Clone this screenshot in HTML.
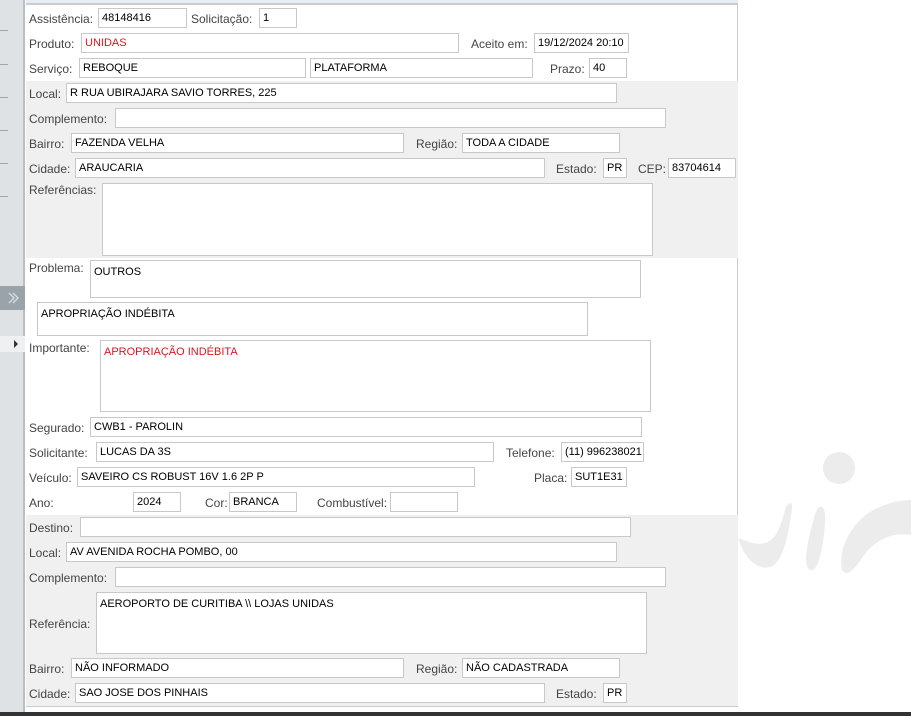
<!DOCTYPE html>
<html><head><meta charset="utf-8"><style>
*{box-sizing:border-box;margin:0;padding:0}
body{width:911px;height:716px;overflow:hidden;background:#fff;font-family:Tahoma,"Liberation Sans",sans-serif;font-size:12px;color:#222;position:relative}
.a{position:absolute}
.l{position:absolute;color:#444;line-height:14px}
.i{position:absolute;background:#fff;border:1px solid #c8c8c8;height:20px;padding:2px 3px;line-height:15px;color:#000;white-space:nowrap;overflow:hidden;font-size:11px}
.t{position:absolute;background:#fff;border:1px solid #c8c8c8;padding:7px 3px;line-height:14px;color:#000;font-size:11px}
.r{color:#e0141e}
.tick{position:absolute;left:0;width:8px;height:1px;background:#9aa}
</style></head><body>
<div class="a" style="left:0;top:0;width:25px;height:712px;background:#dfe2e5;border-right:2px solid #b9bec3"></div>
<div class="tick" style="top:30px"></div><div class="tick" style="top:64px"></div><div class="tick" style="top:97px"></div><div class="tick" style="top:130px"></div><div class="tick" style="top:163px"></div><div class="tick" style="top:196px"></div>
<div class="a" style="left:0;top:286px;width:25px;height:24px;background:#9ba3aa"></div>
<svg class="a" style="left:6px;top:291px" width="14" height="14" viewBox="0 0 14 14"><path d="M3 2 L8 7 L3 12 M7 2 L12 7 L7 12" fill="none" stroke="#d8dde1" stroke-width="1.3"/></svg>
<div class="a" style="left:0;top:336px;width:25px;height:16px;background:#eef0f2"></div>
<div class="a" style="left:14px;top:340px;width:0;height:0;border-left:4px solid #333;border-top:4px solid transparent;border-bottom:4px solid transparent"></div>
<div class="a" style="left:0;top:712px;width:911px;height:4px;background:#333"></div>

<svg class="a" style="left:730px;top:440px" width="181" height="180" viewBox="0 0 181 180">
<circle cx="109" cy="28" r="16" fill="#ececec"/>
<path d="M8 98 C15 120 28 130 40 127 C52 123 58 100 62 68 C63 60 57 62 55 70 C50 90 45 100 35 103 C25 106 15 100 8 98 Z" fill="#ececec"/>
<path d="M94 70 C90 62 86 70 84 78 C78 100 72 125 80 130 C88 133 92 110 94 95 C95 85 96 75 94 70 Z" fill="#ececec"/>
<path d="M112 130 C108 110 120 85 140 72 C155 63 170 60 181 60 L181 95 C165 92 150 98 138 110 C128 122 120 140 112 130 Z" fill="#ececec"/>
</svg>

<div class="a" style="left:26px;top:0;width:712px;height:707px;border-right:1px solid #ccc;border-bottom:1px solid #ccc;background:#fff"></div>
<div class="a" style="left:26px;top:0;width:712px;height:5px;background:#e6eef5;border-bottom:2px solid #c9cdd1"></div>
<div class="a" style="left:26px;top:81px;width:712px;height:177px;background:#f0f0f0"></div>
<div class="a" style="left:26px;top:515px;width:712px;height:191px;background:#f0f0f0"></div>

<div class="l" style="left:29px;top:12px">Assistência:</div><div class="i" style="left:98px;top:8px;width:89px">48148416</div>
<div class="l" style="left:191px;top:12px">Solicitação:</div><div class="i" style="left:259px;top:8px;width:38px">1</div>
<div class="l" style="left:29px;top:37px">Produto:</div><div class="i r" style="left:81px;top:33px;width:378px">UNIDAS</div>
<div class="l" style="left:471px;top:37px">Aceito em:</div><div class="i" style="left:534px;top:33px;width:95px">19/12/2024 20:10</div>
<div class="l" style="left:29px;top:62px">Serviço:</div><div class="i" style="left:79px;top:58px;width:227px">REBOQUE</div>
<div class="i" style="left:310px;top:58px;width:223px">PLATAFORMA</div>
<div class="l" style="left:550px;top:62px">Prazo:</div><div class="i" style="left:589px;top:58px;width:38px">40</div>
<div class="l" style="left:29px;top:87px">Local:</div><div class="i" style="left:66px;top:83px;width:551px">R RUA UBIRAJARA SAVIO TORRES, 225</div>
<div class="l" style="left:29px;top:112px">Complemento:</div><div class="i" style="left:115px;top:108px;width:551px"></div>
<div class="l" style="left:29px;top:137px">Bairro:</div><div class="i" style="left:71px;top:133px;width:333px">FAZENDA VELHA</div>
<div class="l" style="left:416px;top:137px">Região:</div><div class="i" style="left:462px;top:133px;width:158px">TODA A CIDADE</div>
<div class="l" style="left:29px;top:162px">Cidade:</div><div class="i" style="left:75px;top:158px;width:470px">ARAUCARIA</div>
<div class="l" style="left:556px;top:162px">Estado:</div><div class="i" style="left:603px;top:158px;width:24px">PR</div>
<div class="l" style="left:638px;top:162px">CEP:</div><div class="i" style="left:668px;top:158px;width:68px">83704614</div>
<div class="l" style="left:29px;top:183px">Referências:</div><div class="t" style="left:102px;top:183px;width:551px;height:73px"></div>
<div class="l" style="left:29px;top:261px">Problema:</div><div class="t" style="left:90px;top:260px;width:551px;height:38px;padding-top:4px">OUTROS</div>
<div class="t" style="left:37px;top:302px;width:551px;height:34px;padding-top:4px">APROPRIAÇÃO INDÉBITA</div>
<div class="l" style="left:29px;top:341px">Importante:</div><div class="t r" style="left:100px;top:340px;width:551px;height:72px;padding-top:4px">APROPRIAÇÃO INDÉBITA</div>
<div class="l" style="left:29px;top:421px">Segurado:</div><div class="i" style="left:90px;top:417px;width:552px">CWB1 - PAROLIN</div>
<div class="l" style="left:29px;top:446px">Solicitante:</div><div class="i" style="left:96px;top:442px;width:398px">LUCAS DA 3S</div>
<div class="l" style="left:506px;top:446px">Telefone:</div><div class="i" style="left:561px;top:442px;width:83px">(11) 996238021</div>
<div class="l" style="left:29px;top:471px">Veículo:</div><div class="i" style="left:77px;top:467px;width:398px">SAVEIRO CS ROBUST 16V 1.6 2P P</div>
<div class="l" style="left:534px;top:471px">Placa:</div><div class="i" style="left:571px;top:467px;width:56px">SUT1E31</div>
<div class="l" style="left:29px;top:496px">Ano:</div><div class="i" style="left:133px;top:492px;width:48px">2024</div>
<div class="l" style="left:205px;top:496px">Cor:</div><div class="i" style="left:229px;top:492px;width:68px">BRANCA</div>
<div class="l" style="left:317px;top:496px">Combustível:</div><div class="i" style="left:390px;top:492px;width:68px"></div>
<div class="l" style="left:29px;top:521px">Destino:</div><div class="i" style="left:80px;top:517px;width:551px"></div>
<div class="l" style="left:29px;top:546px">Local:</div><div class="i" style="left:66px;top:542px;width:551px">AV AVENIDA ROCHA POMBO, 00</div>
<div class="l" style="left:29px;top:571px">Complemento:</div><div class="i" style="left:115px;top:567px;width:551px"></div>
<div class="l" style="left:29px;top:617px">Referência:</div><div class="t" style="left:96px;top:592px;width:551px;height:62px;padding-top:4px">AEROPORTO DE CURITIBA \\ LOJAS UNIDAS</div>
<div class="l" style="left:29px;top:662px">Bairro:</div><div class="i" style="left:71px;top:658px;width:333px">NÃO INFORMADO</div>
<div class="l" style="left:416px;top:662px">Região:</div><div class="i" style="left:462px;top:658px;width:158px">NÃO CADASTRADA</div>
<div class="l" style="left:29px;top:687px">Cidade:</div><div class="i" style="left:75px;top:683px;width:470px">SAO JOSE DOS PINHAIS</div>
<div class="l" style="left:556px;top:687px">Estado:</div><div class="i" style="left:603px;top:683px;width:24px">PR</div>
</body></html>
